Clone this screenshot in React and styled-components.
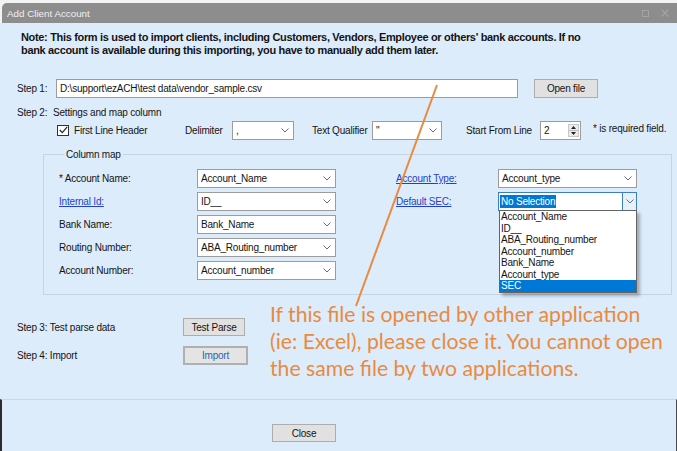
import React from "react";
import styled, { createGlobalStyle, css } from "styled-components";

const UI_FONT = `"Liberation Sans", Arial, sans-serif`;

const Global = createGlobalStyle`
  html, body { margin: 0; padding: 0; background: #f3f3f3; }
  #root { width: 677px; height: 451px; }
  * { box-sizing: border-box; }
`;

const Window = styled.div`
  width: 677px;
  height: 451px;
  display: flex;
  flex-direction: column;
  padding-top: 3px;
  overflow: hidden;
  font-family: ${UI_FONT};
  font-size: 10px;
  letter-spacing: -0.2px;
  color: #141414;
  background: #f3f3f3;
`;

const TitleBar = styled.div`
  height: 20px;
  margin-left: 2px;
  background: #8d8d8d;
  border-top-left-radius: 5px;
  display: flex;
  align-items: center;
  padding: 0 8px 0 5px;
  color: #f0f0f0;
  font-size: 9.8px;
  letter-spacing: 0;
`;

const TitleText = styled.span`
  flex: 1;
`;

const TitleButtons = styled.div`
  display: flex;
  gap: 12px;
  align-items: center;
`;

const Body = styled.div`
  flex: 1;
  position: relative;
  display: flex;
  flex-direction: column;
  background: #ddecfb;
`;

const Main = styled.div`
  flex: 1;
  display: flex;
  flex-direction: column;
  padding-left: 17px;
`;

const Note = styled.div`
  margin: 8px 0 0 4px;
  font-weight: bold;
  font-size: 11px;
  letter-spacing: -0.33px;
  line-height: 13px;
`;

const Row = styled.div`
  display: flex;
  align-items: center;
  margin-top: ${(p) => p.$mt || 0}px;
  height: ${(p) => p.$h || 19}px;
`;

const Label = styled.span`
  display: inline-block;
  flex: none;
  width: ${(p) => p.$w}px;
  margin-left: ${(p) => p.$ml || 0}px;
  white-space: nowrap;
`;

const TextInput = styled.div`
  width: ${(p) => p.$w}px;
  height: ${(p) => p.$h || 19}px;
  background: #fff;
  border: 1px solid #9c9c9c;
  display: flex;
  align-items: center;
  padding-left: 3px;
  white-space: nowrap;
`;

const Button = styled.button`
  flex: none;
  width: ${(p) => p.$w}px;
  height: ${(p) => p.$h}px;
  margin-left: ${(p) => p.$ml || 0}px;
  padding: 0;
  background: #e1e1e1;
  border: 1px solid #adadad;
  font: inherit;
  letter-spacing: inherit;
  color: #141414;
  ${(p) =>
    p.$default &&
    css`
      border: 2px solid #b0b0b0;
      background: #e4e4e4;
      color: #2a62b8;
    `}
`;

const StepHeader = styled.div`
  margin-top: 8px;
  line-height: 13px;
  display: flex;
`;

const CheckWrap = styled.label`
  display: flex;
  align-items: center;
  gap: 5px;
  width: 128px;
  margin-left: 40px;
`;

const CheckBox = styled.span`
  width: 12px;
  height: 11px;
  background: #fff;
  border: 1px solid #333;
  display: flex;
  align-items: center;
  justify-content: center;
`;

const ComboBox = styled.div`
  position: relative;
  flex: none;
  width: ${(p) => p.$w}px;
  height: 19px;
  background: #fff;
  border: 1px solid ${(p) => (p.$focus ? "#3c7fc6" : "#9c9c9c")};
  display: flex;
  align-items: center;
  padding-left: ${(p) => (p.$focus ? 1 : 3)}px;
`;

const ComboText = styled.span`
  flex: 1;
  white-space: nowrap;
  overflow: hidden;
  ${(p) =>
    p.$selected &&
    css`
      flex: none;
      background: #0078d7;
      color: #fff;
      padding: 1px 1px;
      margin-right: auto;
    `}
`;

const ComboArrow = styled.span`
  width: ${(p) => (p.$boxed ? 14 : 16)}px;
  height: 100%;
  display: flex;
  align-items: center;
  justify-content: center;
  ${(p) =>
    p.$boxed &&
    css`
      border-left: 1px solid #3c7fc6;
      background: #e5f1fb;
    `}
`;

const DropList = styled.div`
  position: absolute;
  top: 100%;
  left: 0;
  right: -1px;
  background: #fff;
  border: 1px solid #646464;
  box-shadow: 3px 3px 3px rgba(0, 0, 0, 0.28);
  z-index: 5;
`;

const DropItem = styled.div`
  height: 11.5px;
  line-height: 11.5px;
  padding-left: 1px;
  white-space: nowrap;
  ${(p) =>
    p.$active &&
    css`
      background: #0078d7;
      color: #fff;
    `}
`;

const Spinner = styled.div`
  flex: none;
  width: 41px;
  height: 19px;
  background: #fff;
  border: 1px solid #9c9c9c;
  display: flex;
  padding: 2px 1px 2px 3px;
`;

const SpinValue = styled.span`
  flex: 1;
  line-height: 13px;
`;

const SpinButtons = styled.div`
  width: 11px;
  display: flex;
  flex-direction: column;
  background: #ececec;
  border: 1px solid #c8c8c8;
`;

const SpinHalf = styled.div`
  flex: 1;
  display: flex;
  align-items: center;
  justify-content: center;
  & + & {
    border-top: 1px solid #bdbdbd;
  }
`;

const Required = styled.span`
  margin-left: 12px;
  margin-top: -4px;
  white-space: nowrap;
`;

const GroupBox = styled.fieldset`
  margin: 8px 5px 0 26px;
  padding: 8px 0 14px 15px;
  border: 1px solid #c6d3e0;
  min-width: 0;
`;

const Legend = styled.legend`
  margin-left: 5px;
  padding: 0 2px;
  line-height: 13px;
`;

const MapGrid = styled.div`
  display: grid;
  grid-template-columns: 138px 139px 60px 102px 139px;
  grid-auto-rows: 19px;
  row-gap: 4px;
  align-items: center;
`;

const MapLabel = styled.span`
  white-space: nowrap;
  ${(p) =>
    p.$link &&
    css`
      color: #1f3fd0;
      text-decoration: underline;
    `}
`;

const Footer = styled.div`
  height: 52px;
  flex: none;
  border-top: 1px solid #c9d7e6;
  border-left: 2px solid #2c2c2c;
  border-right: 1px solid #4a4a4a;
  padding: 24px 0 0 270px;
`;

const Annotation = styled.div`
  position: absolute;
  left: 270px;
  top: 278px;
  font-family: Lato, "Open Sans", sans-serif;
  font-size: 21.2px;
  letter-spacing: 0;
  line-height: 27px;
  color: #e98a3f;
  white-space: nowrap;
  pointer-events: none;
`;

const Overlay = styled.svg`
  position: absolute;
  left: 0;
  top: 0;
  width: 677px;
  height: 428px;
  pointer-events: none;
`;

const Chevron = () => (
  <svg width="8" height="5" viewBox="0 0 8 5">
    <path d="M0.5 0.5 L4 4 L7.5 0.5" fill="none" stroke="#6d6d6d" strokeWidth="1" />
  </svg>
);

const Combo = ({ w, value }) => (
  <ComboBox $w={w}>
    <ComboText>{value}</ComboText>
    <ComboArrow>
      <Chevron />
    </ComboArrow>
  </ComboBox>
);

const secOptions = [
  "Account_Name",
  "ID__",
  "ABA_Routing_number",
  "Account_number",
  "Bank_Name",
  "Account_type",
  "SEC",
];

export default function App() {
  return (
    <>
      <Global />
      <Window>
        <TitleBar>
          <TitleText>Add Client Account</TitleText>
          <TitleButtons>
            <svg width="7" height="7" viewBox="0 0 7 7">
              <rect x="0.5" y="0.5" width="6" height="6" fill="none" stroke="#a4a4a4" />
            </svg>
            <svg width="8" height="8" viewBox="0 0 8 8">
              <path d="M0.5 0.5 L7.5 7.5 M7.5 0.5 L0.5 7.5" stroke="#a4a4a4" strokeWidth="1.1" />
            </svg>
          </TitleButtons>
        </TitleBar>
        <Body>
          <Main>
            <Note>
              Note: This form is used to import clients, including Customers, Vendors, Employee or others' bank accounts. If no
              <br />
              bank account is available during this importing, you have to manually add them later.
            </Note>

            <Row $mt={22}>
              <Label $w={39}>Step 1:</Label>
              <TextInput $w={462}>D:\support\ezACH\test data\vendor_sample.csv</TextInput>
              <Button $w={64} $h={19} $ml={16}>
                Open file
              </Button>
            </Row>

            <StepHeader>
              <Label $w={36}>Step 2:</Label>
              <span>Settings and map column</span>
            </StepHeader>

            <Row $mt={1} $h={20}>
              <CheckWrap>
                <CheckBox>
                  <svg width="9" height="8" viewBox="0 0 9 8">
                    <path d="M0.8 4 L3.3 6.6 L8.2 0.8" fill="none" stroke="#222" strokeWidth="1.2" />
                  </svg>
                </CheckBox>
                First Line Header
              </CheckWrap>
              <Label $w={47}>Delimiter</Label>
              <Combo w={62} value="," />
              <Label $w={60} $ml={18}>
                Text Qualifier
              </Label>
              <Combo w={70} value={'"'} />
              <Label $w={74} $ml={24}>
                Start From Line
              </Label>
              <Spinner>
                <SpinValue>2</SpinValue>
                <SpinButtons>
                  <SpinHalf>
                    <svg width="5" height="3" viewBox="0 0 5 3">
                      <path d="M0 3 L2.5 0 L5 3 Z" fill="#222" />
                    </svg>
                  </SpinHalf>
                  <SpinHalf>
                    <svg width="5" height="3" viewBox="0 0 5 3">
                      <path d="M0 0 L2.5 3 L5 0 Z" fill="#222" />
                    </svg>
                  </SpinHalf>
                </SpinButtons>
              </Spinner>
              <Required>* is required field.</Required>
            </Row>

            <GroupBox>
              <Legend>Column map</Legend>
              <MapGrid>
                <MapLabel>* Account Name:</MapLabel>
                <Combo w={139} value="Account_Name" />
                <span />
                <MapLabel $link>Account Type:</MapLabel>
                <Combo w={139} value="Account_type" />

                <MapLabel $link>Internal Id:</MapLabel>
                <Combo w={139} value="ID__" />
                <span />
                <MapLabel $link>Default SEC:</MapLabel>
                <ComboBox $w={139} $focus>
                  <ComboText $selected>No Selection</ComboText>
                  <ComboArrow $boxed>
                    <Chevron />
                  </ComboArrow>
                  <DropList>
                    {secOptions.map((o) => (
                      <DropItem key={o} $active={o === "SEC"}>
                        {o}
                      </DropItem>
                    ))}
                  </DropList>
                </ComboBox>

                <MapLabel>Bank Name:</MapLabel>
                <Combo w={139} value="Bank_Name" />
                <span />
                <span />
                <span />

                <MapLabel>Routing Number:</MapLabel>
                <Combo w={139} value="ABA_Routing_number" />
                <span />
                <span />
                <span />

                <MapLabel>Account Number:</MapLabel>
                <Combo w={139} value="Account_number" />
              </MapGrid>
            </GroupBox>

            <Row $mt={23} $h={18}>
              <Label $w={166}>Step 3: Test parse data</Label>
              <Button $w={62} $h={18}>
                Test Parse
              </Button>
            </Row>
            <Row $mt={10} $h={19}>
              <Label $w={166}>Step 4: Import</Label>
              <Button $w={65} $h={19} $default>
                Import
              </Button>
            </Row>
          </Main>
          <Footer>
            <Button $w={64} $h={18}>
              Close
            </Button>
          </Footer>

          <Overlay viewBox="0 0 677 428">
            <line x1="437" y1="62" x2="356" y2="283" stroke="#e98a3f" strokeWidth="2" />
          </Overlay>
          <Annotation>
            If this file is opened by other application
            <br />
            (ie: Excel), please close it. You cannot open
            <br />
            the same file by two applications.
          </Annotation>
        </Body>
      </Window>
    </>
  );
}
